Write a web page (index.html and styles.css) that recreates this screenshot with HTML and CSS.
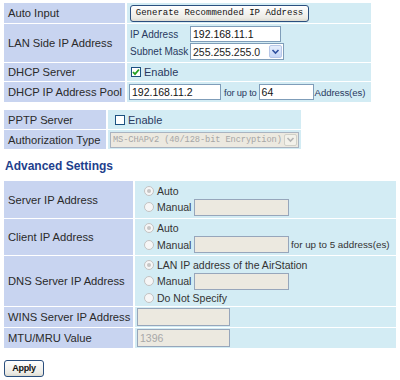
FILE: index.html
```html
<!DOCTYPE html>
<html>
<head>
<meta charset="utf-8">
<link rel="stylesheet" href="styles.css">
</head>
<body>
<div class="page">
  <table class="t t1">
    <colgroup><col class="c1a"><col class="c1b"></colgroup>
    <tr>
      <th>Auto Input</th>
      <td><div class="v h20"><span class="btn gen">Generate Recommended IP Address</span></div></td>
    </tr>
    <tr>
      <th>LAN Side IP Address</th>
      <td><div class="v h38 col">
        <div class="line l16"><span class="sub">IP Address</span><span class="inp on w91">192.168.11.1</span></div>
        <div class="line l17"><span class="sub">Subnet Mask</span><span class="sel on w94"><span class="seltxt">255.255.255.0</span><span class="arr"><svg width="9" height="9" viewBox="0 0 9 9"><path d="M1.5 3 L4.5 6 L7.5 3" fill="none" stroke="#2f4f9f" stroke-width="1.6"/></svg></span></span></div>
      </div></td>
    </tr>
    <tr>
      <th>DHCP Server</th>
      <td><div class="v h18"><span class="cb on"><svg width="8" height="8" viewBox="0 0 8 8"><path d="M1 4 L3 6.2 L7 1.5" fill="none" stroke="#22a022" stroke-width="1.8"/></svg></span><span class="cbl">Enable</span></div></td>
    </tr>
    <tr>
      <th>DHCP IP Address Pool</th>
      <td><div class="v h20"><span class="inp on w92">192.168.11.2</span><span class="txt g4">for up to</span><span class="inp on w55">64</span><span class="txt g1">Address(es)</span></div></td>
    </tr>
  </table>

  <table class="t t2">
    <colgroup><col class="c2a"><col class="c2b"></colgroup>
    <tr>
      <th>PPTP Server</th>
      <td><div class="v h19"><span class="cb pp"></span><span class="cbl">Enable</span></div></td>
    </tr>
    <tr>
      <th>Authorization Type</th>
      <td><div class="v h19"><span class="sel off w189"><span class="seltxt mono">MS-CHAPv2 (40/128-bit Encryption)</span><span class="arr dis"><svg width="9" height="9" viewBox="0 0 9 9"><path d="M1.5 3 L4.5 6 L7.5 3" fill="none" stroke="#b4b4b4" stroke-width="1.6"/></svg></span></span></div></td>
    </tr>
  </table>

  <h2 class="head">Advanced Settings</h2>

  <table class="t t3">
    <colgroup><col class="c3a"><col class="c3b"></colgroup>
    <tr>
      <th>Server IP Address</th>
      <td><div class="v h37 col">
        <div class="line l15"><span class="rd chk"></span><span class="rl">Auto</span></div>
        <div class="line l18"><span class="rd"></span><span class="rl w37">Manual</span><span class="inp off w95"></span></div>
      </div></td>
    </tr>
    <tr>
      <th>Client IP Address</th>
      <td><div class="v h36 col">
        <div class="line l15"><span class="rd chk"></span><span class="rl">Auto</span></div>
        <div class="line l18"><span class="rd"></span><span class="rl w37">Manual</span><span class="inp off w95"></span><span class="txt g2">for up to 5 address(es)</span></div>
      </div></td>
    </tr>
    <tr>
      <th>DNS Server IP Address</th>
      <td><div class="v h50 col">
        <div class="line l15"><span class="rd chk"></span><span class="rl">LAN IP address of the AirStation</span></div>
        <div class="line l18"><span class="rd"></span><span class="rl w37">Manual</span><span class="inp off w95"></span></div>
        <div class="line l15"><span class="rd"></span><span class="rl">Do Not Specify</span></div>
      </div></td>
    </tr>
    <tr>
      <th>WINS Server IP Address</th>
      <td><div class="v h20"><span class="inp off w93"></span></div></td>
    </tr>
    <tr>
      <th>MTU/MRU Value</th>
      <td><div class="v h20"><span class="inp off w93 grey">1396</span></div></td>
    </tr>
  </table>

  <div class="actions"><span class="btn apply">Apply</span></div>
</div>
</body>
</html>
```

FILE: styles.css
```css
* { box-sizing: border-box; }
body {
  margin: 0;
  background: #fff;
  font-family: "Liberation Sans", Arial, sans-serif;
  color: #222;
}
.page { padding: 2px 0 0 2px; }

table.t {
  border-collapse: separate;
  border-spacing: 2px 1px;
  table-layout: fixed;
}
.t1 { width: 371px; }
.t2 { width: 301px; margin-top: 6px; }
.t3 { width: 396px; }
.c1a { width: 121px; }
.c1b { width: 244px; }
.c2a { width: 102px; }
.c2b { width: 193px; }
.c3a { width: 129px; }
.c3b { width: 261px; }

.t th {
  background: #c8d4f0;
  font-weight: normal;
  text-align: left;
  font-size: 11.2px;
  padding: 0 0 0 4px;
  vertical-align: middle;
  white-space: nowrap;
  color: #2a2a2a;
}
.t td {
  background: #d3ecf4;
  padding: 0 0 0 2px;
  vertical-align: middle;
}

.v { display: flex; align-items: center; font-size: 11px; white-space: nowrap; }
.v.col { flex-direction: column; align-items: flex-start; justify-content: center; }
.h18 { height: 18px; }
.h19 { height: 19px; }
.h20 { height: 20px; }
.h36 { height: 36px; }
.h37 { height: 37px; }
.h38 { height: 38px; }
.h50 { height: 50px; }

.line { display: flex; align-items: center; }
.l15 { height: 15px; }
.l16 { height: 16px; margin-bottom: 1px; }
.l17 { height: 17px; }
.l18 { height: 18px; }

.sub { width: 61px; font-size: 10px; color: #2a3a60; padding-left: 1px; }
.txt { font-size: 10px; color: #2a3a60; }
.g4 { margin: 0 2px 0 3px; font-size: 9.4px; letter-spacing: -0.2px; }
.g1 { margin-left: 1px; font-size: 9.6px; letter-spacing: -0.1px; }
.g2 { margin-left: 2px; color: #333; font-size: 9.8px; }

.inp {
  display: inline-flex;
  align-items: center;
  height: 16px;
  border: 1px solid #7f9db9;
  background: #fff;
  font-size: 10.5px;
  padding-left: 2px;
  color: #111;
}
.inp.off {
  background: #ece9e0;
  border-color: #97a6bb;
  height: 17px;
}
.t3 .h20 .inp.off { height: 18px; }
.inp.grey { color: #a8a8a8; }
.w55 { width: 55px; }
.w91 { width: 91px; }
.w92 { width: 92px; }
.w93 { width: 93px; }
.w94 { width: 94px; }
.w95 { width: 95px; }
.w189 { width: 189px; }

.sel {
  display: inline-flex;
  align-items: center;
  justify-content: space-between;
  height: 17px;
  border: 1px solid #7f9db9;
  background: #fff;
  padding: 0 1px 0 2px;
  font-size: 10.5px;
}
.sel.off { height: 16px; background: #ece9e0; border-color: #a9b3c0; color: #a6a6a6; }
.seltxt.mono { font-family: "Liberation Mono", "DejaVu Sans Mono", monospace; font-size: 8.7px; letter-spacing: -0.1px; }
.arr {
  width: 13px;
  height: 13px;
  border: 1px solid #b7c7e8;
  background: linear-gradient(#e6eefc, #c6d6f6);
  border-radius: 2px;
  display: flex;
  align-items: center;
  justify-content: center;
}
.arr.dis { border-color: #d0d0c8; background: #f2f1ea; height: 12px; }

.cb {
  width: 10px;
  height: 10px;
  border: 1px solid #1c5180;
  background: #fff;
  display: inline-flex;
  align-items: center;
  justify-content: center;
  margin-left: 2px;
}
.cb.pp { margin-left: 5px; }
.cbl { margin-left: 3px; font-size: 11px; color: #2a3a60; }

.rd {
  width: 10px;
  height: 10px;
  border-radius: 50%;
  border: 1px solid #c3c3c3;
  background: #f6f6f6;
  margin-left: 7px;
  display: inline-flex;
  align-items: center;
  justify-content: center;
}
.rd.chk::after {
  content: "";
  width: 4px;
  height: 4px;
  border-radius: 50%;
  background: #c6c6c6;
}
.rl { margin-left: 3px; font-size: 10.5px; color: #333; }
.rl.w37 { width: 37px; }

.head {
  margin: 9px 0 7px 3px;
  font-size: 12px;
  line-height: 14px;
  font-weight: bold;
  color: #1e3f8d;
}

.btn {
  display: inline-flex;
  align-items: center;
  justify-content: center;
  border: 1px solid #2b4f7e;
  border-radius: 3px;
  background: linear-gradient(#ffffff, #ecebe5 80%, #dcdad0);
  color: #111;
}
.gen {
  width: 179px;
  height: 17px;
  margin-left: 1px;
  font-family: "Liberation Mono", "DejaVu Sans Mono", monospace;
  font-size: 9px;
}
.actions { margin-top: 8px; padding-left: 2px; }
.apply {
  width: 40px;
  height: 17px;
  font-size: 9px;
  font-weight: bold;
  letter-spacing: -0.3px;
}
```
